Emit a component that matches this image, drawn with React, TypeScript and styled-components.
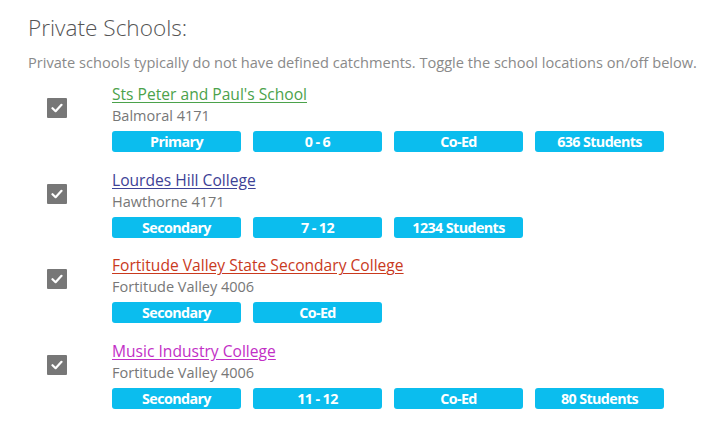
import React, { useState } from 'react';
import styled, { createGlobalStyle } from 'styled-components';

const GlobalStyle = createGlobalStyle`
  body {
    margin: 0;
    background: #fff;
    font-family: "Open Sans", "Liberation Sans", sans-serif;
  }
`;

const Page = styled.div`
  padding: 11px 0 0 28px;
`;

const Title = styled.h2`
  margin: 0;
  font-size: 22.6px;
  font-weight: 300;
  line-height: 34px;
  color: #555;
`;

const Intro = styled.p`
  margin: 7px 0 0;
  font-size: 14.6px;
  line-height: 20px;
  color: #8a8a8a;
`;

const List = styled.div`
  margin-top: 11px;
  display: flex;
  flex-direction: column;
  gap: 16.7px;
`;

const Row = styled.div`
  display: flex;
  align-items: flex-start;
  padding-left: 19px;
`;

const Check = styled.button<{ $on: boolean }>`
  width: 20px;
  height: 20px;
  margin-top: 15px;
  padding: 0;
  border: none;
  border-radius: 1px;
  background: ${p => (p.$on ? '#777' : '#ccc')};
  display: flex;
  align-items: center;
  justify-content: center;
  cursor: pointer;
`;

const Info = styled.div`
  margin-left: 45px;
  display: flex;
  flex-direction: column;
`;

const Name = styled.a<{ $color: string }>`
  font-size: 15.6px;
  line-height: 22px;
  color: ${p => p.$color};
  text-decoration: underline;
  text-underline-offset: 2px;
`;

const Suburb = styled.div`
  font-size: 14.5px;
  line-height: 22px;
  color: #777;
`;

const Tags = styled.div`
  display: flex;
  gap: 12px;
  margin-top: 4px;
`;

const Tag = styled.span`
  width: 129px;
  height: 21px;
  border-radius: 3px;
  background: #0bbdee;
  color: #fff;
  font-size: 14.3px;
  font-weight: 700;
  letter-spacing: -0.6px;
  line-height: 21px;
  text-align: center;
`;

type School = { name: string; color: string; suburb: string; tags: string[] };

const schools: School[] = [
  { name: "Sts Peter and Paul's School", color: '#4ba24b', suburb: 'Balmoral 4171', tags: ['Primary', '0 - 6', 'Co-Ed', '636 Students'] },
  { name: 'Lourdes Hill College', color: '#3d4196', suburb: 'Hawthorne 4171', tags: ['Secondary', '7 - 12', '1234 Students'] },
  { name: 'Fortitude Valley State Secondary College', color: '#c9391d', suburb: 'Fortitude Valley 4006', tags: ['Secondary', 'Co-Ed'] },
  { name: 'Music Industry College', color: '#c22fc6', suburb: 'Fortitude Valley 4006', tags: ['Secondary', '11 - 12', 'Co-Ed', '80 Students'] },
];

function Tick() {
  return (
    <svg width="12" height="10" viewBox="0 0 12 10">
      <path d="M1.5 5.2 L4.6 8.2 L10.5 1.8" fill="none" stroke="#fff" strokeWidth="2.2" strokeLinecap="round" strokeLinejoin="round" />
    </svg>
  );
}

export default function App() {
  const [on, setOn] = useState<boolean[]>(schools.map(() => true));
  const toggle = (i: number) => setOn(on.map((v, j) => (j === i ? !v : v)));

  return (
    <Page>
      <GlobalStyle />
      <Title>Private Schools:</Title>
      <Intro>Private schools typically do not have defined catchments. Toggle the school locations on/off below.</Intro>
      <List>
        {schools.map((s, i) => (
          <Row key={s.name}>
            <Check $on={on[i]} onClick={() => toggle(i)}>{on[i] && <Tick />}</Check>
            <Info>
              <Name href="#" $color={s.color}>{s.name}</Name>
              <Suburb>{s.suburb}</Suburb>
              <Tags>
                {s.tags.map(t => <Tag key={t}>{t}</Tag>)}
              </Tags>
            </Info>
          </Row>
        ))}
      </List>
    </Page>
  );
}
